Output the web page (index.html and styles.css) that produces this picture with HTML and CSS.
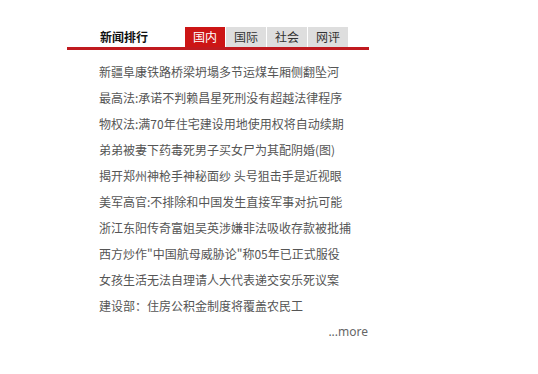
FILE: index.html
```html
<!DOCTYPE html>
<html lang="zh-CN">
<head>
<meta charset="utf-8">
<title>新闻排行</title>
<link rel="stylesheet" href="styles.css">
</head>
<body>
<div class="box">
  <div class="head">
    <div class="title">新闻排行</div>
    <ul class="tabs">
      <li class="tab active">国内</li>
      <li class="tab">国际</li>
      <li class="tab">社会</li>
      <li class="tab">网评</li>
    </ul>
  </div>
  <ul class="list">
    <li>新疆阜康铁路桥梁坍塌多节运煤车厢侧翻坠河</li>
    <li>最高法:承诺不判赖昌星死刑没有超越法律程序</li>
    <li>物权法:满70年住宅建设用地使用权将自动续期</li>
    <li>弟弟被妻下药毒死男子买女尸为其配阴婚(图)</li>
    <li>揭开郑州神枪手神秘面纱 头号狙击手是近视眼</li>
    <li>美军高官:不排除和中国发生直接军事对抗可能</li>
    <li>浙江东阳传奇富姐吴英涉嫌非法吸收存款被批捕</li>
    <li>西方炒作"中国航母威胁论"称05年已正式服役</li>
    <li>女孩生活无法自理请人大代表递交安乐死议案</li>
    <li>建设部：住房公积金制度将覆盖农民工</li>
  </ul>
  <div class="more">...more</div>
</div>
</body>
</html>
```

FILE: styles.css
```css
html, body {
  margin: 0;
  padding: 0;
  background: #fff;
}

body {
  font-family: "Noto Sans CJK SC", "Liberation Sans", sans-serif;
  font-size: 12px;
}

.box {
  width: 302px;
  margin: 27px 0 0 67px;
}

.head {
  display: flex;
  height: 20px;
  border-bottom: 3px solid #c01a1f;
}

.title {
  width: 118px;
  box-sizing: border-box;
  padding-left: 33px;
  line-height: 20px;
  font-weight: bold;
  color: #111;
}

.tabs {
  display: flex;
  gap: 1px;
  margin: 0;
  padding: 0;
  list-style: none;
}

.tab {
  width: 40px;
  height: 20px;
  line-height: 20px;
  text-align: center;
  background: #dedede;
  color: #333;
}

.tab.active {
  background: #cc1515;
  color: #fff;
}

.list {
  margin: 0;
  padding: 9px 0 0 32px;
  list-style: none;
}

.list li {
  line-height: 26px;
  height: 26px;
  color: #555;
  white-space: nowrap;
}

.more {
  line-height: 26px;
  text-align: right;
  padding-right: 1px;
  color: #666;
  font-family: "Noto Sans", "Liberation Sans", sans-serif;
  font-size: 12px;
}
```
